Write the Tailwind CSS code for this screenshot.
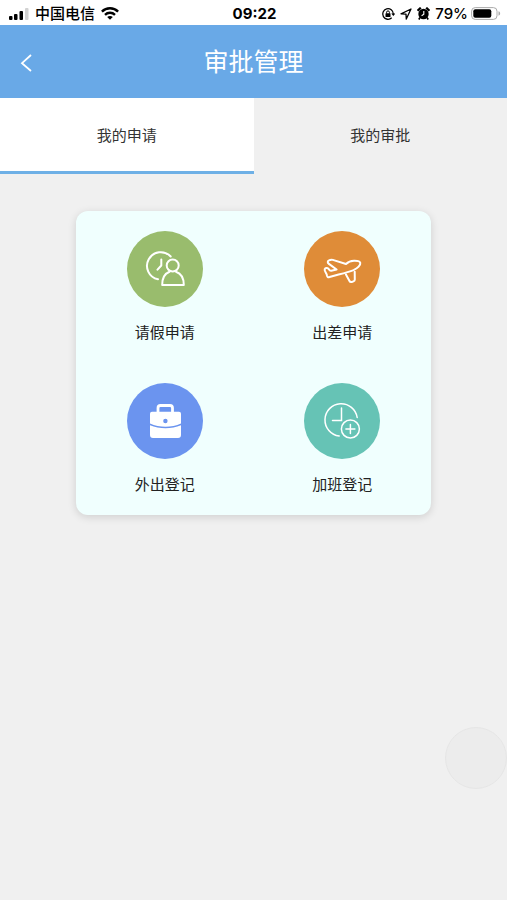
<!DOCTYPE html>
<html lang="zh-CN">
<head>
<meta charset="utf-8">
<meta name="viewport" content="width=device-width, initial-scale=1">
<title>审批管理</title>
<script src="https://cdn.jsdelivr.net/npm/@tailwindcss/browser@4"></script>
</head>
<body class="min-h-screen bg-[#f0f0f0] font-['Liberation_Sans','Noto_Sans_CJK_SC',sans-serif] text-[#333]">
  <div class="grid h-[25px] grid-cols-[1fr_auto_1fr] items-center bg-white pt-[2px] pl-2 pr-[6px] text-black">
    <div class="flex items-center gap-[6px]">
      <svg class="h-[12px] w-[21px]" viewBox="0 0 21 12" aria-hidden="true">
        <rect x="1" y="8" width="3.5" height="4" rx="1"/><rect x="6" y="6" width="3.5" height="6" rx="1"/><rect x="11.5" y="3" width="3.5" height="9" rx="1"/><rect x="17" y="0" width="3.5" height="12" rx="1" fill="#d2d2d2"/>
      </svg>
      <span class="text-[15px] leading-5 font-medium">中国电信</span>
      <svg class="h-[13px] w-[18px]" viewBox="0 0 18 13" fill="none" stroke="#000" stroke-width="2.4" aria-hidden="true">
        <path d="M.9 4.6C5.4.2 12.6.2 17.1 4.6M4 7.8c2.8-2.7 7.2-2.7 10 0"/><path d="M9 12.8 6.2 10.1c1.6-1.4 4-1.4 5.6 0z" fill="#000" stroke="none"/>
      </svg>
    </div>
    <time class="font-[Inter,sans-serif] text-[15px] leading-5 font-bold">09:22</time>
    <div class="flex items-center justify-end gap-[5px]">
      <svg class="h-[14px] w-[14px]" viewBox="0 0 14 14" fill="none" stroke="#000" stroke-width="1.3" aria-hidden="true">
        <path d="M10.7 10.8A5.3 5.3 0 1 1 12.3 7"/><path d="M10.3 6.5h4l-2 2.6z" fill="#000" stroke="none"/><rect x="4.5" y="6.3" width="5" height="3.8" rx=".5" fill="#000" stroke="none"/><path d="M5.6 6.5V5.3a1.4 1.4 0 0 1 2.8 0v1.2" stroke-width="1"/>
      </svg>
      <svg class="h-[12px] w-[12px]" viewBox="0 0 12 12" fill="none" stroke="#000" stroke-width="1.3" stroke-linejoin="round" aria-hidden="true"><path d="M11 1 1 5.8l5 .3.3 5z"/></svg>
      <svg class="h-[13px] w-[13px]" viewBox="0 0 13 13" aria-hidden="true">
        <circle cx="6.5" cy="7" r="5.2"/><path d="M.6 3.800 3.800.7M12.400 3.800 9.200.7" stroke="#000" stroke-width="2.200"/><path d="m3 10.500-1.200 2M10 10.500l1.200 2" stroke="#000" stroke-width="1.600"/><path d="M6.800 4v3.300L4.600 8.800" fill="none" stroke="#fff" stroke-width="1.100"/>
      </svg>
      <span class="font-[Inter,sans-serif] text-[15px] leading-5 font-medium">79%</span>
      <svg class="-ml-[2px] h-[13px] w-[30px]" viewBox="0 0 30 13" aria-hidden="true">
        <rect x=".6" y=".6" width="25.400" height="11.800" rx="3.600" fill="#fff" stroke="#aaa"/><rect x="2.300" y="2.200" width="18" height="8.600" rx="2"/><path d="M27.500 4.300c2.200.7 2.200 3.700 0 4.400z" fill="#aaa"/>
      </svg>
    </div>
  </div>

  <header class="grid h-[73px] grid-cols-[54px_1fr_54px] items-center bg-[#69a9e7] text-white">
    <button type="button" aria-label="返回" class="flex h-full items-center pt-[3px] pl-5">
      <svg class="h-[18px] w-[12px]" viewBox="0 0 12 18" fill="none" stroke="currentColor" stroke-width="1.8" aria-hidden="true"><path d="M11 1 2 9.2 11 17"/></svg>
    </button>
    <h1 class="text-center text-[25px] leading-9 font-normal">审批管理</h1>
  </header>

  <nav class="grid h-[76px] grid-cols-2 text-[15px]">
    <button type="button" aria-pressed="true" class="border-b-[3px] border-[#6eb0e6] bg-white pt-1">我的申请</button>
    <button type="button" aria-pressed="false" class="border-b-[3px] border-transparent pt-1">我的审批</button>
  </nav>

  <main class="pt-[37px]">
    <section class="mx-auto grid w-[70%] grid-cols-2 rounded-xl bg-[#f0fffe] text-[15px] leading-5 text-[#222] shadow-[0_2px_8px_rgba(0,0,0,0.14)]">
      <a href="#leave" class="flex flex-col items-center gap-4 py-5">
        <svg class="size-[76px] rounded-full bg-[#99bc6d]" viewBox="0 0 76 76" fill="none" stroke="#fff" stroke-width="2" stroke-linecap="round" stroke-linejoin="round" aria-hidden="true">
          <path d="M43.7 25.5A13.7 13.7 0 1 0 31 48.3M34.3 28.500v6l-3.800 4.200"/><circle cx="45.700" cy="34.500" r="6"/><path d="M42.500 40.800c-4.500 1.700-7.300 6-7.300 13.200h21.600c0-7.200-2.800-11.500-7.800-13.200"/>
        </svg>
        <span>请假申请</span>
      </a>
      <a href="#trip" class="flex flex-col items-center gap-4 py-5">
        <svg class="size-[76px] rounded-full bg-[#df8c38]" viewBox="0 0 76 76" fill="none" stroke="#fff" stroke-width="2" stroke-linecap="round" stroke-linejoin="round" aria-hidden="true">
          <path d="M20.700 38.200c.7-1.200 2.400-1.600 3.500-.7 1.200 1.100 1.600 2.400 3 2.300l5.400-1.300-7.700-5.600c-1.600-1.200-1.500-2.700.1-3.500 1.200-.7 2.300-1 3.800-.5L42 33c2.200-2.200 4.500-3.200 8-3.300 3.300-.1 5.900.3 6.300 2.200.4 2.200-2.600 5.400-6.800 7.200C42 42 33 43.700 25.500 46c-1.500.4-2.300 0-2.500-1.300-.2-2.500-3-4.500-2.300-6.500z"/><path d="m41.800 43.300 3.700 6.700c.4.900 1.200 1.200 2.200 1l1.800-.6c.9-.3 1.300-1 1.300-1.900l-.1-7.800"/>
        </svg>
        <span>出差申请</span>
      </a>
      <a href="#outing" class="flex flex-col items-center gap-4 py-5">
        <svg class="size-[76px] rounded-full bg-[#6b94ef]" viewBox="0 0 76 76" fill="none" aria-hidden="true">
          <path d="M31 29v-4a2.500 2.500 0 0 1 2.500-2.500h9.500a2.500 2.500 0 0 1 2.500 2.500v4" stroke="#fff" stroke-width="2.800"/>
          <path d="M25 28.700h27a2 2 0 0 1 2 2V40.500c-9.500 4.300-21.500 4.300-31 0v-9.800a2 2 0 0 1 2-2z" fill="#fff"/>
          <path d="M23 42.300c9.500 4 21.500 4 31 0V52a3 3 0 0 1-3 3H26a3 3 0 0 1-3-3z" fill="#fff"/>
          <circle cx="38.400" cy="38" r="2.200" fill="#6b94ef"/>
        </svg>
        <span>外出登记</span>
      </a>
      <a href="#overtime" class="flex flex-col items-center gap-4 py-5">
        <svg class="size-[76px] rounded-full bg-[#66c3b5]" viewBox="0 0 76 76" fill="none" stroke="#fff" stroke-width="1.500" stroke-linecap="round" aria-hidden="true">
          <path d="M53.200 34.500A16.200 16.200 0 1 0 35.200 53M37.500 25v12.600h-9"/><circle cx="46.400" cy="46" r="9"/><path d="M46.400 41.500v9M41.900 46h9"/>
        </svg>
        <span>加班登记</span>
      </a>
    </section>
  </main>

  <button type="button" aria-label="快捷操作" class="fixed right-0 bottom-[111px] size-[62px] rounded-full border border-[#e5e5e5] bg-[#ececec]"></button>
</body>
</html>
